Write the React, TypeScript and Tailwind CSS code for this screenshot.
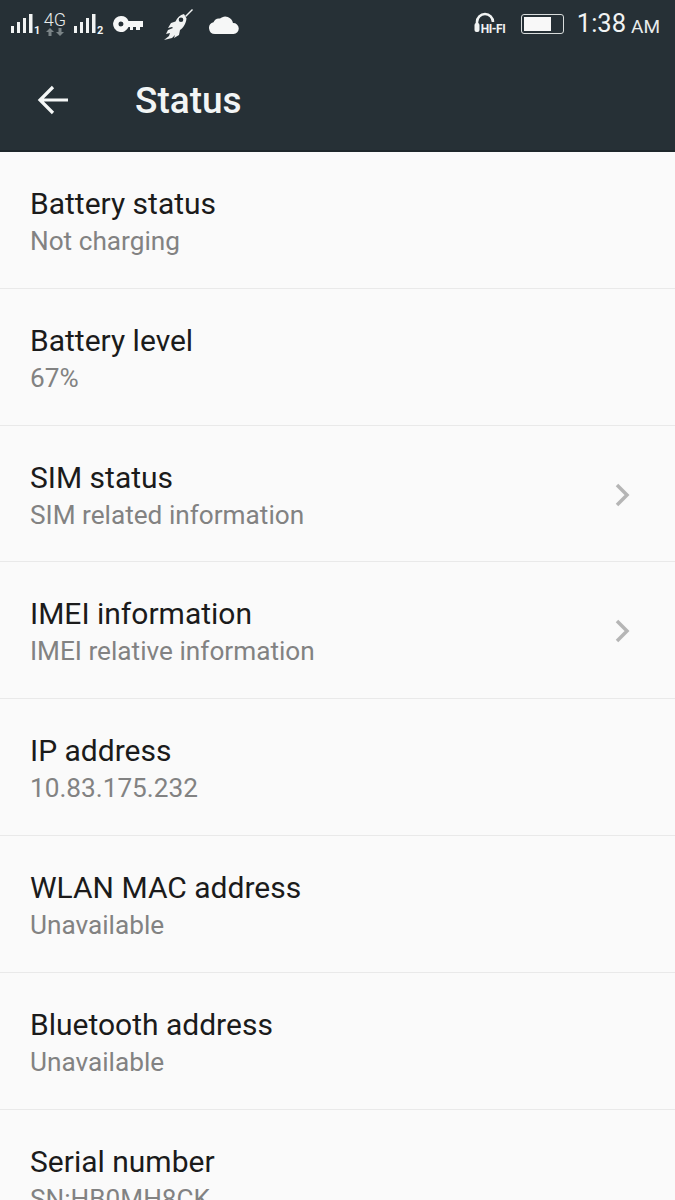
import React from 'react';

const rows = [
  { title: 'Battery status', sub: 'Not charging' },
  { title: 'Battery level', sub: '67%' },
  { title: 'SIM status', sub: 'SIM related information', chevron: true },
  { title: 'IMEI information', sub: 'IMEI relative information', chevron: true },
  { title: 'IP address', sub: '10.83.175.232' },
  { title: 'WLAN MAC address', sub: 'Unavailable' },
  { title: 'Bluetooth address', sub: 'Unavailable' },
  { title: 'Serial number', sub: 'SN:HB0MH8CK' },
];

const Signal = ({ n }: { n: string }) => (
  <div className="relative w-[30px] h-[24px]">
    <svg width="24" height="24" viewBox="0 0 24 24" fill="#f1f3f3">
      <rect x="0" y="14" width="3" height="7" />
      <rect x="6" y="10" width="3" height="11" />
      <rect x="12" y="6" width="3" height="15" />
      <rect x="18" y="2" width="3.500" height="19" />
    </svg>
    <span className="absolute left-[23px] top-[13px] text-[11px] leading-[11px] font-bold text-[#f1f3f3]">{n}</span>
  </div>
);

const StatusBar = () => (
  <div className="h-[48px] flex items-center justify-between pl-[11px] pr-[15px] font-['Roboto',sans-serif]">
    <div className="flex items-center">
      <Signal n="1" />
      <div className="ml-[3px] w-[22px] flex flex-col items-center">
        <span className="text-[18px] leading-[16px] text-[#e8ebeb] font-light">4G</span>
        <svg width="20" height="9" viewBox="0 0 20 9" fill="#7b8487">
          <path d="M5 0l4 4H6.500v4h-3V4H1zM15 8l-4-4h2.500V0h3v4H19z" />
        </svg>
      </div>
      <div className="ml-[8px]">
        <Signal n="2" />
      </div>
      <svg className="ml-[8px]" width="32" height="18" viewBox="0 0 32 18" fill="#f6f7f7">
        <path fillRule="evenodd" d="M9 1a8 8 0 0 1 7.500 5H31v6h-3v3h-4v-3h-3v3h-3v-3h-1.500A8 8 0 1 1 9 1zm0 5.500a2.500 2.500 0 1 0 0 5 2.500 2.500 0 0 0 0-5z" />
      </svg>
      <svg className="ml-[17px]" width="32" height="32" viewBox="0 0 32 32" fill="#f1f3f3">
        <path d="M31 1l-7 7 1 1 7-7z" />
        <path fillRule="evenodd" d="M23 6c-4 1-7 4-8.500 7.500L10 15l-3 5 4-1 1 1-5 2-2 4 4-1-1 3-5 4 8-2 3-3-1 3 5-3 1-5c3-2 6-6 6.500-11.500zM20 9.500a2.300 2.300 0 1 1 0 4.600 2.300 2.300 0 0 1 0-4.600z" />
      </svg>
      <svg className="ml-[15px]" width="31" height="22" viewBox="0 0 31 22" fill="#f6f7f7">
        <path d="M7 21a6 6 0 0 1-1.500-11.800A6 6 0 0 1 12 5.500 8 8 0 0 1 25 10a5.500 5.500 0 0 1 .500 11z" />
      </svg>
    </div>
    <div className="flex items-center">
      <div className="relative w-[30px] h-[24px] mr-[17px]">
        <svg width="22" height="22" viewBox="0 0 22 22" fill="none" stroke="#f1f3f3" strokeWidth="2.600">
          <path d="M3 14V10a8 8 0 0 1 16 0" />
          <rect x="0.500" y="11" width="5" height="9" rx="2" fill="#f1f3f3" stroke="none" />
        </svg>
        <span className="absolute left-[7px] top-[11px] whitespace-nowrap text-[12px] leading-[13px] font-bold tracking-[-0.5px] text-[#f1f3f3]">HI-FI</span>
      </div>
      <div className="w-[43px] h-[20px] border-[1.500px] border-[#d8dcdc] rounded-[3px] p-[2px] mr-[13px]">
        <div className="w-[27px] h-full bg-[#f8f8f8]" />
      </div>
      <span className="text-[25.500px] leading-none text-[#f1f3f3]">1:38</span>
      <span className="ml-[5px] mt-[4px] text-[19px] leading-none text-[#e8ebeb]">AM</span>
    </div>
  </div>
);

const App: React.FC = () => {
  return (
    <div className="w-[675px] h-[1200px] overflow-hidden bg-[#fafafa] font-['Roboto',sans-serif]">
      {/* Header */}
      <div className="h-[152px] bg-[#263036] border-b-2 border-[#1e272b]">
        <StatusBar />
        <div className="h-[104px] flex items-center">
          <svg className="ml-[37px]" width="32" height="30" viewBox="0 0 32 30" fill="none" stroke="#f5f7f7" strokeWidth="3.200">
            <path d="M31 15H3M16 2L3 15l13 13" />
          </svg>
          <span className="ml-[66px] text-[37px] leading-none font-medium text-[#f2f5f5]">Status</span>
        </div>
      </div>

      {rows.map((row) => (
        <div key={row.title} className="h-[136.800px] px-[30px] flex items-start justify-between border-b border-[#e9e9e9]">
          <div>
            <div className="mt-[33px] text-[30px] leading-[38px] text-[#1b1b1b]">{row.title}</div>
            <div className="-mt-[1px] text-[26.200px] leading-[38px] text-[#828282]">{row.sub}</div>
          </div>
          {row.chevron && (
            <svg className="mt-[56px] mr-[14px]" width="16" height="26" viewBox="0 0 16 26" fill="none" stroke="#b5b5b5" strokeWidth="3.500">
              <path d="M2 3l10 10L2 23" />
            </svg>
          )}
        </div>
      ))}
    </div>
  );
};

export default App;
